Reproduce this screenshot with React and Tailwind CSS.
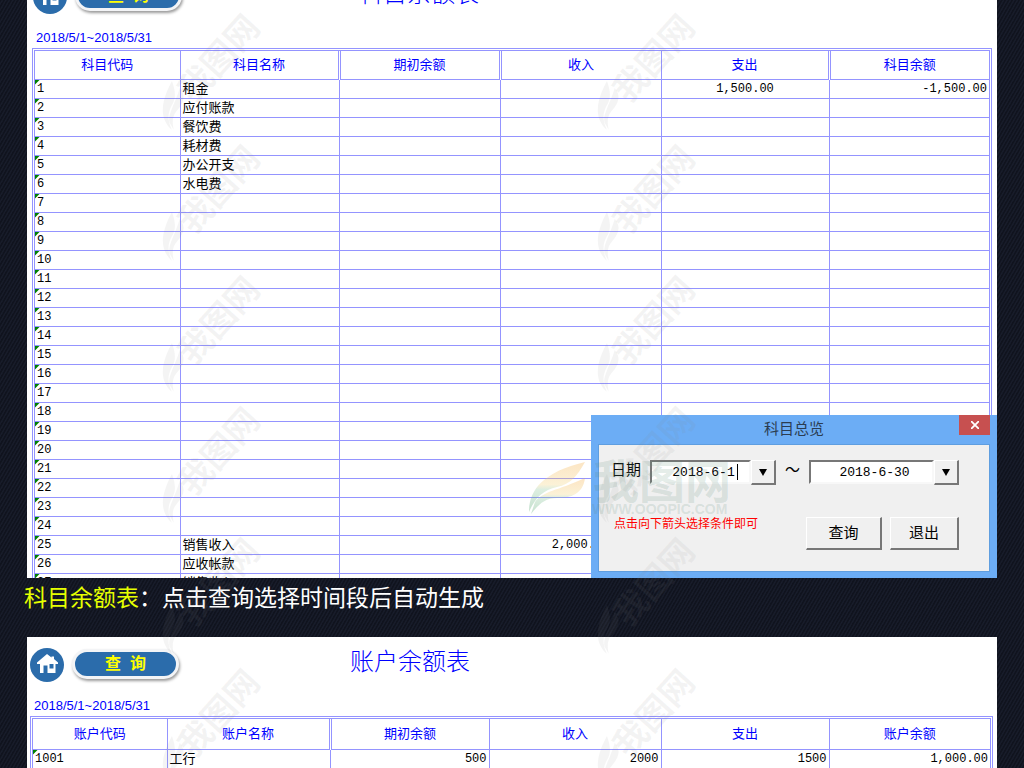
const SUBJECT_COLUMNS = [
  { title: "科目代码", width: "w-[145px]" },
  { title: "科目名称", width: "w-[159px]", double: true },
  { title: "期初余额", width: "w-[161px]", double: true },
  { title: "收入", width: "w-[161px]", align: "text-center" },
  { title: "支出", width: "w-[168px]", double: true, align: "text-center" },
  { title: "科目余额", width: "w-[160px]", align: "text-right" },
];

const ACCOUNT_COLUMNS = [
  { title: "账户代码", width: "w-[134px]" },
  { title: "账户名称", width: "w-[163px]", double: true },
  { title: "期初余额", width: "w-[159px]", align: "text-right" },
  { title: "收入", width: "w-[172px]", align: "text-right" },
  { title: "支出", width: "w-[168px]", align: "text-right" },
  { title: "账户余额", width: "w-[161px]", align: "text-right" },
];

const SUBJECTS = {
  1: ["租金", "", "", "1,500.00", "-1,500.00"],
  2: ["应付账款"],
  3: ["餐饮费"],
  4: ["耗材费"],
  5: ["办公开支"],
  6: ["水电费"],
  25: ["销售收入", "", "2,000.00", "", "2,000.00"],
  26: ["应收帐款"],
  27: ["销售收入"],
};

const SUBJECT_ROWS = Array.from({ length: 27 }, (_, i) => {
  const cells = SUBJECTS[i + 1] || [];
  return [String(i + 1), ...Array.from({ length: 5 }, (_, c) => cells[c] || "")];
});

const ACCOUNT_ROWS = [["1001", "工行", "500", "2000", "1500", "1,000.00"]];

const WATERMARKS = [160, 595].flatMap((x) =>
  [10, 141, 272, 403, 534, 665].map((y) => ({ x, y }))
);

const CJK = "font-['Liberation_Sans','Noto_Sans_CJK_SC',sans-serif]";
const MONO = "font-['Liberation_Mono','Noto_Sans_CJK_SC',monospace]";

function HomeIcon() {
  return (
    <svg viewBox="0 0 34 34" className="size-[34px]" aria-hidden="true">
      <circle cx="17" cy="17" r="17" fill="#2b6cab" />
      <path
        fill="#fff"
        d="M17 6 7 14.5V16h3v9h3.5v-7.5h4V25h8v-9H28v-1.5L24 11V8.5h-2.5v1z"
      />
      <path fill="#2b6cab" d="M19.5 16h4v4.5h-4z" />
    </svg>
  );
}

function Leaf() {
  return (
    <g>
      <path d="M2 52C2 30 16 12 58 2C50 16 44 24 30 27C16 30 8 38 2 52z" />
      <path d="M8 42C16 31 30 31 58 18C56 34 44 38 30 38C18 38 12 44 4 54z" />
    </g>
  );
}

function Watermark() {
  return (
    <svg className="pointer-events-none absolute inset-0 size-full" aria-hidden="true">
      <defs>
        <linearGradient id="leaf" x1="0" y1="0" x2="0" y2="1">
          <stop offset="0" stopColor="#f5a83a" />
          <stop offset="0.45" stopColor="#f3d27a" />
          <stop offset="0.55" stopColor="#8cc79a" />
          <stop offset="1" stopColor="#3f9a5f" />
        </linearGradient>
      </defs>
      {WATERMARKS.map(({ x, y }) => (
        <g
          key={`${x}-${y}`}
          transform={`translate(${x + 2} ${y + 110}) rotate(-48)`}
          fill="#888"
          fillOpacity="0.09"
        >
          <g transform="translate(-2 -20) scale(0.65)">
            <Leaf />
          </g>
          <text x="33" y="13" className={`text-[34px] font-bold ${CJK}`}>
            我图网
          </text>
        </g>
      ))}
      <g transform="translate(527 460)" fill="url(#leaf)" fillOpacity="0.3">
        <Leaf />
      </g>
      <g fill="#5d8c78" fillOpacity="0.18">
        <text x="593" y="498" className={`text-[46px] font-bold ${CJK}`}>
          我图网
        </text>
        <text x="592" y="514" className={`text-sm font-bold ${CJK}`}>
          WWW.OOOPIC.COM
        </text>
      </g>
    </svg>
  );
}

function SheetHeader({ title, offset }) {
  return (
    <div className={`flex items-start ${offset ? "pl-[6px]" : "pl-[3px]"}`}>
      <button type="button" aria-label="首页" className="mt-[11px]">
        <HomeIcon />
      </button>
      <button
        type="button"
        className="mt-3 ml-2 h-[30px] w-[107px] rounded-full border-3 border-gray-100 bg-[#2b6cab] text-base leading-6 font-bold whitespace-pre text-[#ffff00] shadow-[1px_2px_3px_rgba(0,0,0,0.4)]"
      >
        {"查  询"}
      </button>
      <h2 className={`mt-[9px] text-2xl leading-8 font-light text-[#0000ff] ${offset ? "ml-[177px]" : "ml-[171px]"}`}>
        {title}
      </h2>
    </div>
  );
}

function Sheet({ columns, rows, headHeight }) {
  return (
    <div className="border-3 border-double border-[#9494ff]">
      <table className="w-full table-fixed border-collapse">
        <thead>
          <tr className={headHeight}>
            {columns.map((col, i) => (
              <th
                key={col.title}
                scope="col"
                className={`${col.width} border-b border-[#9494ff] p-0 text-[13px] leading-4 font-normal text-[#0000ff] ${
                  i === columns.length - 1 ? "" : col.double ? "border-r-3 [border-right-style:double]" : "border-r"
                }`}
              >
                {col.title}
              </th>
            ))}
          </tr>
        </thead>
        <tbody>
          {rows.map((row) => (
            <tr key={row[0]} className="h-[19px]">
              {row.map((cell, i) => (
                <td
                  key={columns[i].title}
                  className={`relative border-b border-[#9494ff] px-[2px] py-0 leading-[18px] text-black ${
                    i === 1 ? "text-[13px]" : `text-xs ${MONO}`
                  } ${columns[i].align || ""} ${i < row.length - 1 ? "border-r" : ""}`}
                >
                  {i === 0 && (
                    <span className="absolute top-0 left-0 size-[5px] bg-[#008000] [clip-path:polygon(0_0,100%_0,0_100%)]" />
                  )}
                  {cell}
                </td>
              ))}
            </tr>
          ))}
        </tbody>
      </table>
    </div>
  );
}

const RAISED =
  "border border-r-2 border-b-2 border-t-white border-l-white border-r-[#777] border-b-[#777] bg-[#f0f0f0]";
const SUNKEN =
  "border-2 border-t-[#777] border-l-[#777] border-r-[#f8f8f8] border-b-[#f8f8f8] bg-white";

function DateBox({ id, label, value, width, caret }) {
  return (
    <div className="relative flex">
      <input
        id={id}
        aria-label={label}
        defaultValue={value}
        className={`h-6 text-center text-[13px] text-black outline-none ${width} ${MONO} ${SUNKEN} pl-[6px]`}
      />
      {caret && <span className="absolute top-1 right-[38px] h-4 w-px bg-black" />}
      <button
        type="button"
        aria-label={`选择${label}`}
        className={`flex h-[25px] w-[25px] items-center justify-center ${RAISED}`}
      >
        <svg viewBox="0 0 8 7" className="h-[7px] w-2" aria-hidden="true">
          <path d="M0 0h8L4 7z" />
        </svg>
      </button>
    </div>
  );
}

function QueryDialog() {
  return (
    <div
      role="dialog"
      aria-label="科目总览"
      className="absolute right-0 bottom-0 w-[406px] bg-[#6cadf5] px-[7px] pb-[6px]"
    >
      <div className="relative flex h-[29px] items-center justify-center text-[15px] text-[#2b3d52]">
        科目总览
        <button
          type="button"
          aria-label="关闭"
          className="absolute top-0 right-0 flex h-5 w-[31px] items-center justify-center bg-[#c75050]"
        >
          <svg viewBox="0 0 8 8" className="size-2" stroke="#fff" strokeWidth="1.8" aria-hidden="true">
            <path d="M0 0l8 8M8 0L0 8" />
          </svg>
        </button>
      </div>
      <div className="h-32 border border-[#5f9ee0] bg-[#f0f0f0] pt-[15px] pr-[30px] pl-3">
        <div className="flex items-start justify-between text-[15px] leading-5 text-black">
          <label htmlFor="date-from">日期</label>
          <DateBox id="date-from" label="开始日期" value="2018-6-1" width="w-[101px]" caret />
          <span>～</span>
          <DateBox id="date-to" label="结束日期" value="2018-6-30" width="w-[125px]" />
        </div>
        <div className="mt-8 flex items-start text-[15px]">
          <p className="ml-[3px] flex-1 text-xs leading-[14px] text-[#ff0000]">点击向下箭头选择条件即可</p>
          <button type="button" className={`h-[33px] w-[76px] ${RAISED}`}>
            查询
          </button>
          <button type="button" className={`ml-2 h-[33px] w-[69px] ${RAISED}`}>
            退出
          </button>
        </div>
      </div>
    </div>
  );
}

export default function App() {
  return (
    <div
      className={`relative h-screen overflow-hidden bg-[#141825] bg-[repeating-linear-gradient(120deg,rgba(0,0,0,0.2)_0px,rgba(0,0,0,0.2)_1px,rgba(60,68,90,0.12)_2px,rgba(20,24,37,0)_3px)] ${CJK}`}
    >
      <section className="relative mx-[27px] -mt-[31px] h-[609px] overflow-hidden bg-white">
        <SheetHeader title="科目余额表" offset />
        <p className="mt-[14px] ml-[9px] text-[13px] leading-5 text-[#0000ff]">2018/5/1~2018/5/31</p>
        <div className="mr-[5px] ml-[5px]">
          <Sheet columns={SUBJECT_COLUMNS} rows={SUBJECT_ROWS} headHeight="h-[28px]" />
        </div>
        <QueryDialog />
      </section>

      <p className="ml-6 h-[59px] pt-1 text-[23px] leading-8 text-white">
        <span className="text-[#e6ff00]">科目余额表</span>：点击查询选择时间段后自动生成
      </p>

      <section className="mx-[27px] bg-white">
        <SheetHeader title="账户余额表" />
        <p className="mt-[14px] ml-[7px] text-[13px] leading-5 text-[#0000ff]">2018/5/1~2018/5/31</p>
        <div className="mr-1 ml-[3px]">
          <Sheet columns={ACCOUNT_COLUMNS} rows={ACCOUNT_ROWS} headHeight="h-[30px]" />
        </div>
      </section>

      <Watermark />
    </div>
  );
}
